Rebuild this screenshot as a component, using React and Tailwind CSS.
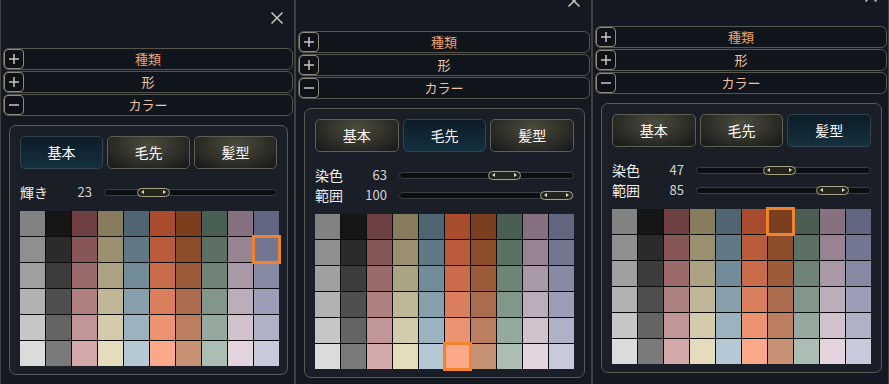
import { useState } from 'react';

const columns = [
  ['#828282', '#8f8f8f', '#a0a0a0', '#b2b2b2', '#c6c6c6', '#dcdcdc'],
  ['#161616', '#2b2b2b', '#3d3d3d', '#4f4f4f', '#646464', '#7a7a7a'],
  ['#6f4042', '#875657', '#9b6b6c', '#af8080', '#c29696', '#d4a9aa'],
  ['#877d5e', '#9a9070', '#aca384', '#bfb798', '#d3cbab', '#e5dcbe'],
  ['#4f6672', '#617985', '#728c99', '#869fab', '#9bb3bf', '#b4c9d4'],
  ['#a94b2d', '#ba5b3b', '#ca6c4c', '#da7e5e', '#ec9372', '#fba98a'],
  ['#7b3f20', '#8c4d2d', '#9c5c3b', '#ac6d4e', '#bb7f60', '#c79174'],
  ['#4b5e53', '#5c7064', '#6f8377', '#82968a', '#96a99e', '#acbeb3'],
  ['#85717f', '#978391', '#a998a6', '#bcadba', '#d0c1cc', '#e3d4de'],
  ['#636680', '#747791', '#878aa3', '#9b9eb6', '#afb2c7', '#c8cadc'],
];

const panels = [
  { shift: 'mt-0', width: 'w-[295px]', active: 0, sel: [1, 9], sliders: [{ label: '輝き', value: 23 }] },
  { shift: '-mt-[17px]', width: 'w-[297px]', active: 1, sel: [5, 5], sliders: [{ label: '染色', value: 63 }, { label: '範囲', value: 100 }] },
  { shift: '-mt-[22px]', width: 'w-[297px]', active: 2, sel: [0, 6], sliders: [{ label: '染色', value: 47 }, { label: '範囲', value: 85 }] },
];

const tabs = ['基本', '毛先', '髪型'];

function ToggleBox({ open }) {
  return (
    <div className="w-[20px] h-[20px] rounded-[4px] border-[1.5px] border-[#8c8c7c] bg-[#0e1218] flex items-center justify-center">
      <svg width="14" height="14" viewBox="0 0 14 14">
        <line x1="2" y1="7" x2="12" y2="7" stroke="#c9c9c0" strokeWidth="1.5" />
        {!open && <line x1="7" y1="2" x2="7" y2="12" stroke="#c9c9c0" strokeWidth="1.5" />}
      </svg>
    </div>
  );
}

function HeaderRow({ title, open, color }) {
  return (
    <div className="relative h-[22px] rounded-[6px] border border-[#55574f] bg-[#10141b] flex items-center">
      <ToggleBox open={open} />
      <span className={`absolute inset-0 flex items-center justify-center text-[13px] ${color}`}>{title}</span>
    </div>
  );
}

function Slider({ label, value }) {
  return (
    <div className="h-[20px] flex items-center">
      <span className="w-[38px] text-[14px] text-[#ececec]">{label}</span>
      <span className="w-[34px] text-right text-[13px] text-[#d4d4d4]">{value}</span>
      <div className="ml-[12px] flex-1 relative h-[7px] rounded-full bg-[#0b0d10] border border-[#3c4044]">
        <div
          className="absolute -top-[2px] h-[9px] w-[33px] rounded-full border border-[#a8a288] bg-[#24241f] flex items-center justify-between px-[3px]"
          style={{ left: `${(value / 100) * 140}px` }}
        >
          <span className="w-0 h-0 border-y-[2.5px] border-y-transparent border-r-[3px] border-r-[#d8d8d0]" />
          <span className="w-0 h-0 border-y-[2.5px] border-y-transparent border-l-[3px] border-l-[#d8d8d0]" />
        </div>
      </div>
    </div>
  );
}

function Panel({ shift, width, active, sel, sliders }) {
  const [tab, setTab] = useState(active);
  return (
    <div className={`${width} ${shift} shrink-0 h-[420px] border-x border-[#3e423f] bg-[#131821] pl-[2px] pr-[1px]`}>
      <div className="h-[48px] flex justify-end pt-[11px] pr-[9px]">
        <svg width="14" height="14" viewBox="0 0 14 14">
          <line x1="1.5" y1="1.5" x2="12.5" y2="12.5" stroke="#c4c4bc" strokeWidth="1.6" />
          <line x1="12.5" y1="1.5" x2="1.5" y2="12.5" stroke="#c4c4bc" strokeWidth="1.6" />
        </svg>
      </div>
      <div className="flex flex-col gap-[1px]">
        <HeaderRow title="種類" color="text-[#eaa46f]" />
        <HeaderRow title="形" color="text-[#efc3a3]" />
        <HeaderRow title="カラー" open color="text-[#efc0a0]" />
      </div>
      <div className="mt-[9px] ml-[6px] mr-[5px] rounded-[7px] border border-[#585b54] bg-[#1a1f27] px-[10px] pt-[10px] pb-[8px]">
        <div className="flex gap-[4px]">
          {tabs.map((t, i) => (
            <button
              key={t}
              onClick={() => setTab(i)}
              className={
                i === tab
                  ? 'flex-1 h-[33px] rounded-[5px] border border-[#34444e] bg-[linear-gradient(#0d1c27,#14303f)] text-[14px] text-white'
                  : 'flex-1 h-[33px] rounded-[5px] border border-[#5f5f52] bg-[radial-gradient(ellipse_at_50%_25%,#4c4b3f_0%,#35352c_45%,#15161a_100%)] text-[14px] text-white'
              }
            >
              {t}
            </button>
          ))}
        </div>
        <div className="mt-[13px] flex flex-col">
          {sliders.map((s) => (
            <Slider key={s.label} label={s.label} value={s.value} />
          ))}
        </div>
        <div className="mt-[9px] grid grid-cols-10 grid-rows-6 gap-px bg-[#0c0c0c] w-[259px] h-[155px]">
          {Array.from({ length: 6 }).map((_, r) =>
            columns.map((col, c) => {
              const picked = sel[0] === r && sel[1] === c;
              return (
                <div
                  key={`${r}-${c}`}
                  className={picked ? 'relative z-10 outline-3 outline-solid outline-[#f0832b] -outline-offset-1' : ''}
                  style={{ backgroundColor: col[r] }}
                />
              );
            })
          )}
        </div>
      </div>
    </div>
  );
}

export default function App() {
  return (
    <div className="w-[889px] h-[384px] overflow-hidden bg-[#131821] flex items-start font-['Noto_Sans_CJK_JP','Liberation_Sans',sans-serif]">
      {panels.map((p, i) => (
        <Panel key={i} {...p} />
      ))}
    </div>
  );
}
